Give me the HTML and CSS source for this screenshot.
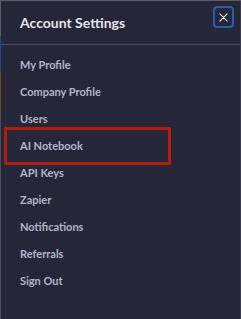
FILE: index.html
```html
<!DOCTYPE html>
<html lang="en">
<head>
    <meta charset="UTF-8">
    <meta name="viewport" content="width=device-width, initial-scale=1.0">
    <title>Account Settings</title>
    <link rel="stylesheet" href="styles.css">
</head>
<body>
    <div id="panel">
        <div class="panel-header">
            <h2>Account Settings</h2>
            <button class="close-btn" aria-label="Close">
                <svg width="9" height="9" viewBox="0 0 10 10">
                    <path d="M1 1 L9 9 M9 1 L1 9" stroke="#e8e8f0" stroke-width="1.3" stroke-linecap="round"/>
                </svg>
            </button>
        </div>
        <ul class="menu">
            <li>My Profile</li>
            <li>Company Profile</li>
            <li>Users</li>
            <li class="marked">AI Notebook<span class="mark-box"></span></li>
            <li>API Keys</li>
            <li>Zapier</li>
            <li>Notifications</li>
            <li>Referrals</li>
            <li>Sign Out</li>
        </ul>
    </div>
</body>
</html>
```
FILE: styles.css
```css
html, body {
    height: 100%;
}
body {
    margin: 0;
    padding: 1px 0 0 1px;
    box-sizing: border-box;
    font-family: Lato, "Noto Sans", sans-serif;
    background: linear-gradient(to bottom, #5b5b63 0 36px, #1d4791 36px 71px, #6e4a0f 71px 110px, #4d4d55 110px);
}
#panel {
    height: 100%;
    background-color: #252638;
    border-right: 1px solid #3a3b4e;
}
.panel-header {
    height: 43px;
    display: flex;
    align-items: flex-start;
    justify-content: space-between;
    padding: 0 6px 0 19px;
    border-bottom: 1px solid #4b4b64;
}
.panel-header h2 {
    margin: 13px 0 0 0;
    font-size: 14px;
    font-weight: 700;
    color: #e4e4ec;
}
.close-btn {
    margin-top: 5px;
    width: 21px;
    height: 22px;
    padding: 0;
    display: flex;
    align-items: center;
    justify-content: center;
    background: transparent;
    border: 2px solid #2b5cab;
    border-radius: 4px;
    cursor: pointer;
}
.menu {
    list-style: none;
    margin: 0;
    padding: 6px 0 0 0;
}
.menu li {
    height: 27px;
    line-height: 27px;
    padding-left: 19px;
    font-size: 11px;
    font-weight: 700;
    color: #b3b5cb;
}
/* red annotation box round the AI Notebook row */
.marked {
    position: relative;
}
.mark-box {
    position: absolute;
    left: 3px;
    top: -5px;
    width: 161px;
    height: 32px;
    border: 3px solid #b01d0f;
}
```
